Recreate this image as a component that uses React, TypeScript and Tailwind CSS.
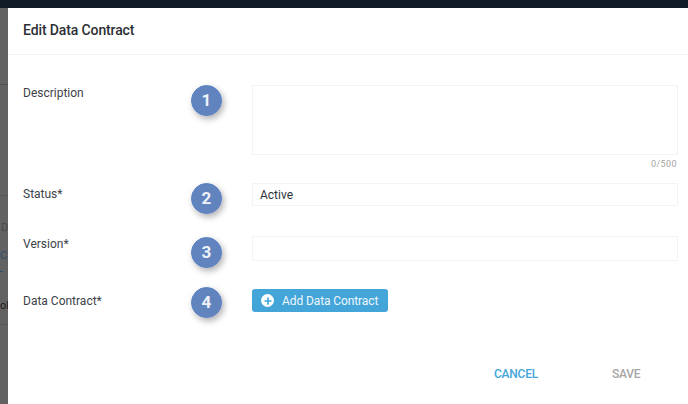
import { Plus } from "lucide-react";
import type { ReactNode } from "react";

function Badge({ n }: { n: number }) {
  return (
    <div className="flex h-[31px] w-[31px] items-center justify-center rounded-full border border-[#5b82c9] bg-[#6184bf] text-[17px] font-bold text-[#eef2f8] shadow-[2px_3px_6px_rgba(0,0,0,0.3)]">
      {n}
    </div>
  );
}

function Row({
  label,
  n,
  labelOffset,
  badgeOffset,
  className,
  children,
}: {
  label: string;
  n: number;
  labelOffset: string;
  badgeOffset: string;
  className: string;
  children: ReactNode;
}) {
  return (
    <div className={`grid grid-cols-[168px_61px_426px] ${className}`}>
      <div className={`text-xs leading-[16px] text-[#3d4249] ${labelOffset}`}>{label}</div>
      <div className={badgeOffset}>
        <Badge n={n} />
      </div>
      <div>{children}</div>
    </div>
  );
}

export default function App() {
  return (
    <div className="flex h-[404px] w-[688px] flex-col overflow-hidden bg-[#11192a] font-['Roboto',sans-serif]">
      <div className="h-2 shrink-0 bg-[#111b27]" />
      <div className="flex min-h-0 flex-1">
        <div className="relative w-2 shrink-0 overflow-hidden bg-[#626262]">
          <div className="absolute left-0 top-[76px] h-px w-2 bg-[#525252]" />
          <div className="absolute left-0 top-[187px] h-px w-2 bg-[#585858]" />
          <div className="absolute left-[1px] top-[214px] text-[11px] leading-none text-[#484848]">D</div>
          <div className="absolute left-0 top-[242px] text-[11px] leading-none text-[#2f4d70]">C</div>
          <div className="absolute left-0 top-[263px] h-px w-[3px] bg-[#2f4d70]" />
          <div className="absolute left-0 top-[292px] text-[11px] leading-none text-[#1c1c1c]">ol</div>
          <div className="absolute left-0 top-[316px] h-px w-2 bg-[#585858]" />
        </div>
        <div className="flex min-w-0 flex-1 flex-col bg-white">
          <div className="flex h-[47px] shrink-0 items-center border-b border-[#f3f3f3] pb-[2px] pl-[15px]">
            <h1 className="text-sm font-medium tracking-[-0.12px] text-[#2c3036]">Edit Data Contract</h1>
          </div>
          <div className="flex-1 pl-[15px] pt-[30px]">
            <Row label="Description" n={1} labelOffset="" badgeOffset="" className="">
              <div className="h-[70px] border border-[#f3f3f3]" />
              <div className="mt-[3px] pr-[1px] text-right text-[9px] leading-[12px] tracking-[0.4px] text-[#a3a3a3]">
                0/500
              </div>
            </Row>
            <Row label="Status*" n={2} labelOffset="pt-[3px]" badgeOffset="" className="mt-[13px]">
              <div className="flex h-[23px] items-center border border-[#f3f3f3] pl-[7px] text-xs text-[#30343a]">
                Active
              </div>
            </Row>
            <Row label="Version*" n={3} labelOffset="" badgeOffset="pt-[1px]" className="mt-[22px]">
              <div className="h-[25px] border border-[#f3f3f3]" />
            </Row>
            <Row label="Data Contract*" n={4} labelOffset="pt-[6px]" badgeOffset="" className="mt-[19px]">
              <button className="mt-[2px] flex h-[23px] w-[136px] items-center rounded-[3px] bg-[#44a5d9] pl-[9px] text-xs tracking-[-0.1px] whitespace-nowrap text-[#eef7fc]">
                <span className="flex h-[13px] w-[13px] items-center justify-center rounded-full bg-white">
                  <Plus size={10} strokeWidth={4} className="text-[#44a5d9]" />
                </span>
                <span className="ml-[8px]">Add Data Contract</span>
              </button>
            </Row>
          </div>
          <div className="flex h-[60px] shrink-0 pl-[486px] pt-[22px] text-xs font-medium tracking-[-0.25px]">
            <span className="text-[#44a5d9]">CANCEL</span>
            <span className="ml-[74px] text-[#a6a6a6]">SAVE</span>
          </div>
        </div>
      </div>
    </div>
  );
}
